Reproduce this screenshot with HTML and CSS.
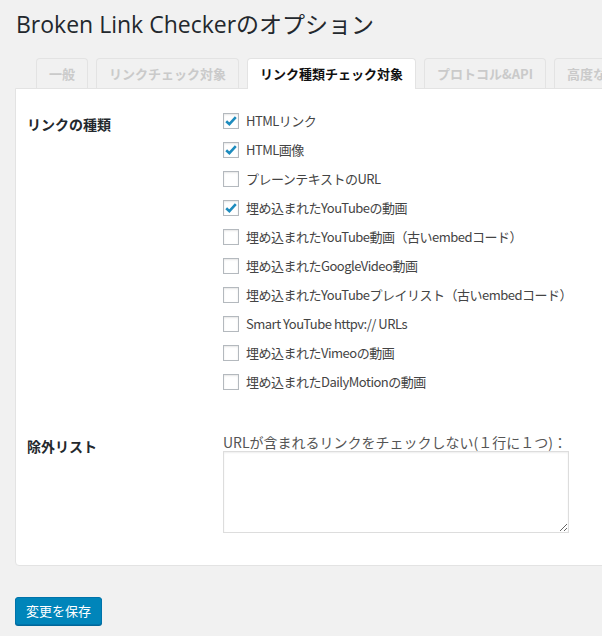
FILE: index.html
```html
<!DOCTYPE html>
<html lang="ja">
<head>
<meta charset="utf-8">
<title>Broken Link Checkerのオプション</title>
<link rel="stylesheet" href="styles.css">
</head>
<body>
<div class="wrap">
  <h1 class="title">Broken Link Checkerのオプション</h1>
  <nav class="tabs">
    <span class="tab">一般</span>
    <span class="tab">リンクチェック対象</span>
    <span class="tab active">リンク種類チェック対象</span>
    <span class="tab">プロトコル&amp;API</span>
    <span class="tab">高度な設定</span>
  </nav>
  <div class="panel">
    <div class="form-row">
      <div class="row-label">リンクの種類</div>
      <div class="checks">
        <label class="check"><span class="cb on"><svg viewBox="0 0 16 16"><path d="M3.2 8.2 6.4 11.2 12.8 4.2" /></svg></span>HTMLリンク</label>
        <label class="check"><span class="cb on"><svg viewBox="0 0 16 16"><path d="M3.2 8.2 6.4 11.2 12.8 4.2" /></svg></span>HTML画像</label>
        <label class="check"><span class="cb"></span>プレーンテキストのURL</label>
        <label class="check"><span class="cb on"><svg viewBox="0 0 16 16"><path d="M3.2 8.2 6.4 11.2 12.8 4.2" /></svg></span>埋め込まれたYouTubeの動画</label>
        <label class="check"><span class="cb"></span>埋め込まれたYouTube動画（古いembedコード）</label>
        <label class="check"><span class="cb"></span>埋め込まれたGoogleVideo動画</label>
        <label class="check"><span class="cb"></span>埋め込まれたYouTubeプレイリスト（古いembedコード）</label>
        <label class="check"><span class="cb"></span>Smart YouTube httpv:// URLs</label>
        <label class="check"><span class="cb"></span>埋め込まれたVimeoの動画</label>
        <label class="check"><span class="cb"></span>埋め込まれたDailyMotionの動画</label>
      </div>
    </div>
    <div class="form-row exclude">
      <div class="row-label">除外リスト</div>
      <div class="field">
        <div class="field-label">URLが含まれるリンクをチェックしない(１行に１つ)：</div>
        <textarea class="ta"></textarea>
      </div>
    </div>
  </div>
  <button class="btn" type="button">変更を保存</button>
</div>
</body>
</html>
```

FILE: styles.css
```css
html, body {
  margin: 0;
  padding: 0;
  overflow: hidden;
}
body {
  background: #f1f1f1;
  color: #444;
  font-family: "Noto Sans CJK JP", sans-serif;
  font-size: 13px;
  width: 602px;
  height: 636px;
}
.wrap {
  padding: 0 0 0 15px;
}
.title {
  margin: 0;
  padding: 10px 0 0 1px;
  font-family: "Open Sans", "Noto Sans CJK JP", sans-serif;
  font-size: 23px;
  font-weight: 400;
  line-height: 29px;
  color: #23282d;
}
.tabs {
  display: flex;
  gap: 8px;
  margin: 19px 0 0 21px;
  white-space: nowrap;
  position: relative;
  z-index: 1;
}
.tab {
  display: block;
  height: 29px;
  line-height: 29px;
  padding: 0 12px;
  border: 1px solid #e3e3e3;
  border-bottom: none;
  border-radius: 4px 4px 0 0;
  background: #f1f1f1;
  color: #cacaca;
  font-weight: 700;
  font-size: 13px;
}
.tab.active {
  background: #fff;
  color: #111;
  height: 30px;
  margin-bottom: -1px;
}
.panel {
  width: 620px;
  background: #fff;
  border: 1px solid #e3e3e3;
  border-radius: 0 0 0 4px;
  padding: 24px 0 32px 11px;
  box-sizing: border-box;
}
.form-row {
  display: grid;
  grid-template-columns: 196px 1fr;
}
.row-label {
  font-weight: 700;
  font-size: 14px;
  color: #23282d;
  line-height: 20px;
  padding-top: 1px;
}
.checks {
  display: flex;
  flex-direction: column;
  gap: 13px;
}
.check {
  display: flex;
  align-items: center;
  height: 16px;
  line-height: 16px;
  color: #444;
  letter-spacing: -0.5px;
  white-space: nowrap;
}
.cb {
  flex: none;
  width: 16px;
  height: 16px;
  box-sizing: border-box;
  border: 1px solid #b4b9be;
  background: #fff;
  box-shadow: inset 0 1px 2px rgba(0,0,0,0.1);
  margin-right: 7px;
  display: flex;
  align-items: center;
  justify-content: center;
}
.cb svg {
  width: 16px;
  height: 16px;
  margin: -1px;
}
.cb svg path {
  fill: none;
  stroke: #1e8cbe;
  stroke-width: 2.6;
}
.exclude {
  margin-top: 43px;
}
.exclude .row-label {
  padding-top: 3px;
}
.field-label {
  font-size: 14px;
  line-height: 18px;
  color: #555;
  white-space: nowrap;
}
.ta {
  display: block;
  width: 346px;
  height: 82px;
  margin: 0;
  box-sizing: border-box;
  border: 1px solid #ddd;
  box-shadow: inset 0 1px 2px rgba(0,0,0,0.07);
  background: #fff;
}
.btn {
  display: block;
  margin-top: 31px;
  height: 28px;
  padding: 0 10px;
  border: 1px solid #0073aa;
  border-radius: 3px;
  background: #0085ba;
  box-shadow: 0 1px 0 #006799;
  color: #fff;
  font-family: "Noto Sans CJK JP", sans-serif;
  font-size: 13px;
  line-height: 26px;
  cursor: pointer;
}
```
